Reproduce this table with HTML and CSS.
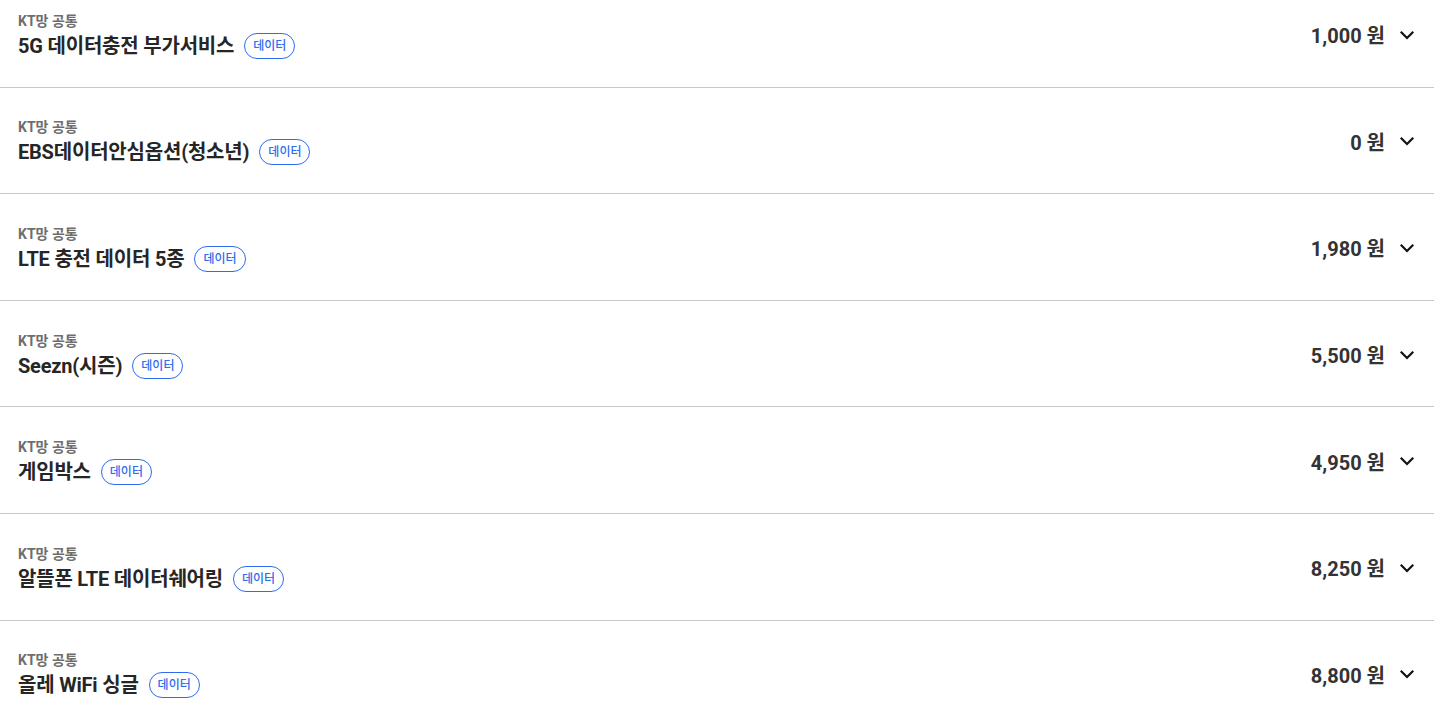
FILE: index.html
```html
<!DOCTYPE html>
<html lang="ko">
<head>
<meta charset="utf-8">
<link rel="stylesheet" href="styles.css">
</head>
<body>
<div class="list">
  <div class="row">
    <div class="info">
      <div class="net">KT망 공통</div>
      <div class="title-line"><span class="title">5G 데이터충전 부가서비스</span><span class="badge">데이터</span></div>
    </div>
    <div class="price-wrap"><span class="price">1,000 원</span><svg class="chev" viewBox="0 0 14 14"><path d="M1.5 4.5 L7 10 L12.5 4.5" /></svg></div>
  </div>
  <div class="row">
    <div class="info">
      <div class="net">KT망 공통</div>
      <div class="title-line"><span class="title">EBS데이터안심옵션(청소년)</span><span class="badge">데이터</span></div>
    </div>
    <div class="price-wrap"><span class="price">0 원</span><svg class="chev" viewBox="0 0 14 14"><path d="M1.5 4.5 L7 10 L12.5 4.5" /></svg></div>
  </div>
  <div class="row">
    <div class="info">
      <div class="net">KT망 공통</div>
      <div class="title-line"><span class="title">LTE 충전 데이터 5종</span><span class="badge">데이터</span></div>
    </div>
    <div class="price-wrap"><span class="price">1,980 원</span><svg class="chev" viewBox="0 0 14 14"><path d="M1.5 4.5 L7 10 L12.5 4.5" /></svg></div>
  </div>
  <div class="row">
    <div class="info">
      <div class="net">KT망 공통</div>
      <div class="title-line"><span class="title">Seezn(시즌)</span><span class="badge">데이터</span></div>
    </div>
    <div class="price-wrap"><span class="price">5,500 원</span><svg class="chev" viewBox="0 0 14 14"><path d="M1.5 4.5 L7 10 L12.5 4.5" /></svg></div>
  </div>
  <div class="row">
    <div class="info">
      <div class="net">KT망 공통</div>
      <div class="title-line"><span class="title">게임박스</span><span class="badge">데이터</span></div>
    </div>
    <div class="price-wrap"><span class="price">4,950 원</span><svg class="chev" viewBox="0 0 14 14"><path d="M1.5 4.5 L7 10 L12.5 4.5" /></svg></div>
  </div>
  <div class="row">
    <div class="info">
      <div class="net">KT망 공통</div>
      <div class="title-line"><span class="title">알뜰폰 LTE 데이터쉐어링</span><span class="badge">데이터</span></div>
    </div>
    <div class="price-wrap"><span class="price">8,250 원</span><svg class="chev" viewBox="0 0 14 14"><path d="M1.5 4.5 L7 10 L12.5 4.5" /></svg></div>
  </div>
  <div class="row">
    <div class="info">
      <div class="net">KT망 공통</div>
      <div class="title-line"><span class="title">올레 WiFi 싱글</span><span class="badge">데이터</span></div>
    </div>
    <div class="price-wrap"><span class="price">8,800 원</span><svg class="chev" viewBox="0 0 14 14"><path d="M1.5 4.5 L7 10 L12.5 4.5" /></svg></div>
  </div>
</div>
</body>
</html>
```
FILE: styles.css
```css
html, body {
  margin: 0;
  padding: 0;
  background: #fff;
  overflow: hidden;
}
body {
  font-family: Roboto, "Noto Sans CJK KR", sans-serif;
  color: #222;
}
.list {
  width: 1434px;
  margin-top: -19px;
}
.row {
  box-sizing: border-box;
  height: 106.6px;
  display: flex;
  align-items: center;
  justify-content: space-between;
  padding: 0 20px 0 18px;
  border-bottom: 1px solid #c8c8c8;
}
.info {
  display: flex;
  flex-direction: column;
  gap: 1px;
  padding-top: 3px;
}
.net {
  font-size: 14px;
  font-weight: 700;
  color: #6e6e6e;
  line-height: 20px;
}
.title-line {
  display: flex;
  align-items: center;
  gap: 10px;
}
.title {
  font-size: 20px;
  font-weight: 700;
  color: #262626;
  line-height: 28px;
  letter-spacing: -0.2px;
}
.badge {
  box-sizing: border-box;
  height: 26px;
  padding: 0 8px;
  border: 1px solid #2f6bf0;
  border-radius: 13px;
  color: #2f6bf0;
  font-size: 12px;
  line-height: 24px;
  font-weight: 500;
}
.price-wrap {
  display: flex;
  align-items: center;
  gap: 15px;
  padding-top: 2px;
}
.price {
  font-size: 20px;
  font-weight: 700;
  color: #333;
}
.chev {
  width: 14px;
  height: 14px;
  fill: none;
  stroke: #111;
  stroke-width: 2.2;
  stroke-linecap: square;
}
```
